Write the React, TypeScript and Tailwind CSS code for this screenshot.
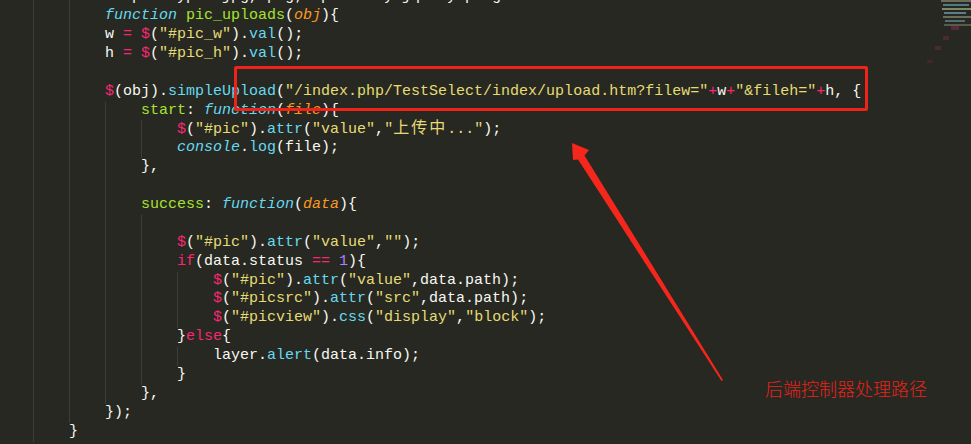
import React from 'react'

// monokai-ish token colours
const K = 'text-[#66d9ef] italic'
const F = 'text-[#a6e22e]'
const P = 'text-[#fd971f] italic'
const W = 'text-[#f8f8f2]'
const O = 'text-[#f92672]'
const S = 'text-[#e6db74]'
const M = 'text-[#66d9ef]'
const N = 'text-[#ae81ff]'
const CJK = 'text-[#e6db74] text-[16px] tracking-[2px]'

type Tok = [string, string]
interface Line {
  indent: number
  toks: Tok[]
}

const lines: Line[] = [
  { indent: 3, toks: [[W, '/* pic type: jpg, png; upload by jquery plugin */']] },
  { indent: 3, toks: [[K, 'function'], [W, ' '], [F, 'pic_uploads'], [W, '('], [P, 'obj'], [W, '){']] },
  { indent: 3, toks: [[W, 'w '], [O, '='], [W, ' '], [O, '$'], [W, '('], [S, '"#pic_w"'], [W, ').'], [M, 'val'], [W, '();']] },
  { indent: 3, toks: [[W, 'h '], [O, '='], [W, ' '], [O, '$'], [W, '('], [S, '"#pic_h"'], [W, ').'], [M, 'val'], [W, '();']] },
  { indent: 3, toks: [] },
  {
    indent: 3,
    toks: [
      [O, '$'],
      [W, '(obj).'],
      [M, 'simpleUpload'],
      [W, '('],
      [S, '"/index.php/TestSelect/index/upload.htm?filew="'],
      [O, '+'],
      [W, 'w'],
      [O, '+'],
      [S, '"&fileh="'],
      [O, '+'],
      [W, 'h, {'],
    ],
  },
  { indent: 4, toks: [[F, 'start'], [W, ': '], [K, 'function'], [W, '('], [P, 'file'], [W, '){']] },
  {
    indent: 5,
    toks: [[O, '$'], [W, '('], [S, '"#pic"'], [W, ').'], [M, 'attr'], [W, '('], [S, '"value"'], [W, ','], [S, '"'], [CJK, '上传中'], [S, '..."'], [W, ');']],
  },
  { indent: 5, toks: [[K, 'console'], [W, '.'], [M, 'log'], [W, '(file);']] },
  { indent: 4, toks: [[W, '},']] },
  { indent: 4, toks: [] },
  { indent: 4, toks: [[F, 'success'], [W, ': '], [K, 'function'], [W, '('], [P, 'data'], [W, '){']] },
  { indent: 5, toks: [] },
  { indent: 5, toks: [[O, '$'], [W, '('], [S, '"#pic"'], [W, ').'], [M, 'attr'], [W, '('], [S, '"value"'], [W, ','], [S, '""'], [W, ');']] },
  { indent: 5, toks: [[O, 'if'], [W, '(data.status '], [O, '=='], [W, ' '], [N, '1'], [W, '){']] },
  { indent: 6, toks: [[O, '$'], [W, '('], [S, '"#pic"'], [W, ').'], [M, 'attr'], [W, '('], [S, '"value"'], [W, ',data.path);']] },
  { indent: 6, toks: [[O, '$'], [W, '('], [S, '"#picsrc"'], [W, ').'], [M, 'attr'], [W, '('], [S, '"src"'], [W, ',data.path);']] },
  { indent: 6, toks: [[O, '$'], [W, '('], [S, '"#picview"'], [W, ').'], [M, 'css'], [W, '('], [S, '"display"'], [W, ','], [S, '"block"'], [W, ');']] },
  { indent: 5, toks: [[W, '}'], [O, 'else'], [W, '{']] },
  { indent: 6, toks: [[W, 'layer.'], [M, 'alert'], [W, '(data.info);']] },
  { indent: 5, toks: [[W, '}']] },
  { indent: 4, toks: [[W, '},']] },
  { indent: 3, toks: [[W, '});']] },
  { indent: 2, toks: [[W, '}']] },
  { indent: 1, toks: [] },
]

const CodeLine = ({ line }: { line: Line }) => (
  <div className="flex h-[18.9px] leading-[18.9px] whitespace-pre">
    {Array.from({ length: line.indent }).map((_, k) => (
      <span key={k} className={k === 0 ? 'w-[36px] shrink-0' : 'w-[36px] shrink-0 border-l border-[#3d3e38]'} />
    ))}
    <span>
      {line.toks.map((t, i) => (
        <span key={i} className={t[0]}>
          {t[1]}
        </span>
      ))}
    </span>
  </div>
)

const Minimap = () => (
  <svg className="absolute top-0 right-0" width="60" height="70" viewBox="0 0 60 70">
    <rect x="30" y="0" width="30" height="2" fill="#6b6b58" />
    <rect x="32" y="4" width="26" height="2" fill="#4d7b86" />
    <rect x="31" y="8" width="29" height="2" fill="#7f8a63" />
    <rect x="33" y="12" width="22" height="2" fill="#5d7c8a" />
    <rect x="32" y="16" width="28" height="2" fill="#6b6d5a" />
    <rect x="34" y="20" width="20" height="2" fill="#4f6f6f" />
    <rect x="33" y="24" width="27" height="2" fill="#5a5a4a" />
    <rect x="40" y="26" width="8" height="4" fill="#5a2a3a" />
    <rect x="32" y="36" width="6" height="4" fill="#4a2a36" />
    <rect x="24" y="46" width="6" height="4" fill="#4a2a36" />
    <rect x="16" y="60" width="6" height="3" fill="#42262e" />
  </svg>
)

export default function App() {
  return (
    <div className="relative w-[971px] h-[444px] overflow-hidden bg-[#272822] font-['Liberation_Mono','Noto_Sans_CJK_SC',monospace] text-[15px]">
      <div className="mt-[-11.8px] ml-[-3px]">
        {lines.map((l, i) => (
          <CodeLine key={i} line={l} />
        ))}
      </div>

      <Minimap />

      {/* annotation box */}
      <div className="absolute left-[234px] top-[66px] w-[634px] h-[45px] border-[3px] border-[#ee2319] rounded-[2px]" />

      <svg className="absolute left-0 top-0 pointer-events-none" width="971" height="444" viewBox="0 0 971 444">
        <polygon
          points="572,143 589,150 584.5,155.5 723,380 721.5,381 578,159.5 573,160"
          fill="#f5261b"
        />
      </svg>

      <div className="absolute left-[765px] top-[378px] leading-[20px] text-[18px] text-[#e8221a] font-light font-['Noto_Sans_CJK_SC',sans-serif]">
        后端控制器处理路径
      </div>
    </div>
  )
}
